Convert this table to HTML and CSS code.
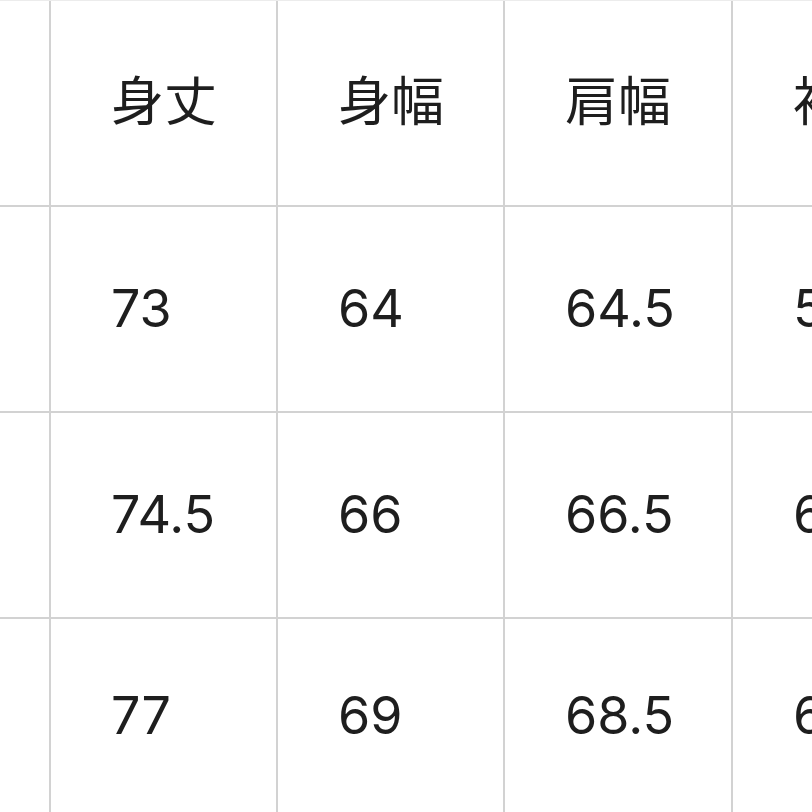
FILE: index.html
```html
<!DOCTYPE html>
<html lang="ja">
<head>
<meta charset="utf-8">
<link rel="stylesheet" href="styles.css">
</head>
<body>
<div class="sheet">
  <div class="cell edge"></div><div class="cell head">身丈</div><div class="cell head">身幅</div><div class="cell head">肩幅</div><div class="cell head last">袖丈</div>
  <div class="cell edge"></div><div class="cell">73</div><div class="cell">64</div><div class="cell">64.5</div><div class="cell last">58</div>
  <div class="cell edge"></div><div class="cell">74.5</div><div class="cell">66</div><div class="cell">66.5</div><div class="cell last">60</div>
  <div class="cell edge foot"></div><div class="cell foot">77</div><div class="cell foot">69</div><div class="cell foot">68.5</div><div class="cell last foot">62</div>
</div>
</body>
</html>
```

FILE: styles.css
```css
html, body {
  margin: 0;
  padding: 0;
  background: #ffffff;
  overflow: hidden;
}
.sheet {
  display: grid;
  grid-template-columns: 51px 227px 227px 228px 300px;
  grid-template-rows: 206px 206px 206px 194px;
  width: 1033px;
  border-top: 1px solid #ececec;
  box-sizing: border-box;
  font-family: Inter, "Noto Sans CJK JP", sans-serif;
  font-size: 52px;
  line-height: 1;
  color: #1e1e1e;
}
.cell {
  box-sizing: border-box;
  border-right: 2px solid #d2d2d2;
  border-bottom: 2px solid #d2d2d2;
  display: flex;
  align-items: center;
  padding-left: 60px;
  padding-bottom: 0;
  white-space: nowrap;
  overflow: hidden;
}
.head {
  font-family: "Noto Sans CJK JP", sans-serif;
  font-size: 53px;
  padding-left: 60px;
  padding-bottom: 10px;
}
.edge {
  padding-left: 0;
}
.last {
  border-right: none;
}
.foot {
  border-bottom: 1px solid #e6e6e6;
}
```
